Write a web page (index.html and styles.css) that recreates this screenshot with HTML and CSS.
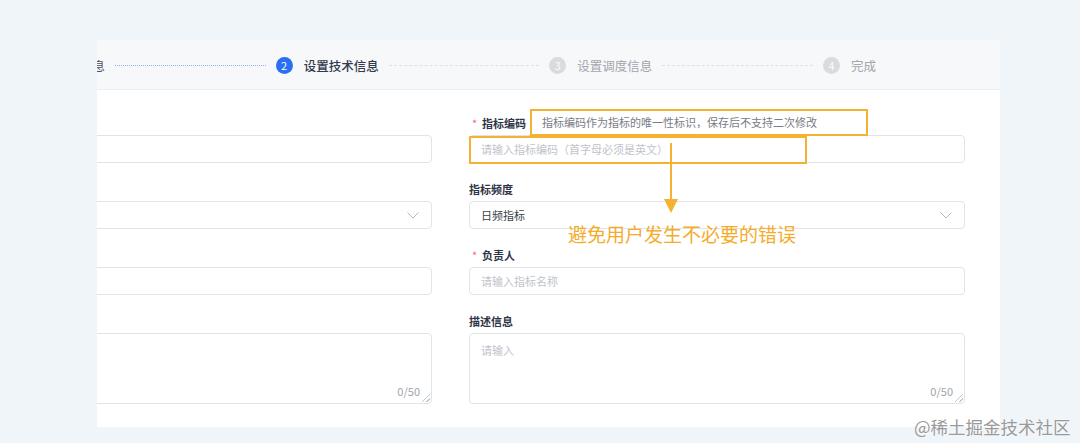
FILE: index.html
```html
<!DOCTYPE html>
<html lang="zh-CN">
<head>
<meta charset="utf-8">
<title>设置技术信息</title>
<link rel="stylesheet" href="styles.css">
</head>
<body>
  <div class="card">
    <div class="steps">
      <div class="steps-track">
        <div class="step done"><span class="dot">1</span><span class="step-title">设置基础信息</span></div>
        <div class="line done"></div>
        <div class="step active"><span class="dot">2</span><span class="step-title">设置技术信息</span></div>
        <div class="line"></div>
        <div class="step"><span class="dot">3</span><span class="step-title">设置调度信息</span></div>
        <div class="line"></div>
        <div class="step"><span class="dot">4</span><span class="step-title">完成</span></div>
      </div>
    </div>
    <div class="form">
      <div class="form-grid">
        <div class="col">
          <div class="field">
            <div class="label"></div>
            <input class="input">
          </div>
          <div class="field">
            <div class="label"></div>
            <div class="input select"><span class="ph"></span>
              <svg class="chev" width="12" height="7" viewBox="0 0 12 7"><path d="M0.5 0.5 L6 6 L11.5 0.5" fill="none" stroke="#b4b8bf" stroke-width="1"/></svg>
            </div>
          </div>
          <div class="field">
            <div class="label"></div>
            <input class="input">
          </div>
          <div class="field">
            <div class="label"></div>
            <div class="ta-wrap">
              <textarea class="input textarea"></textarea>
              <span class="count">0/50</span>
              <span class="grip"></span>
            </div>
          </div>
        </div>
        <div class="col">
          <div class="field">
            <div class="label"><span class="req">*</span>指标编码</div>
            <input class="input" placeholder="请输入指标编码（首字母必须是英文）">
          </div>
          <div class="field">
            <div class="label">指标频度</div>
            <div class="input select"><span class="val">日频指标</span>
              <svg class="chev" width="12" height="7" viewBox="0 0 12 7"><path d="M0.5 0.5 L6 6 L11.5 0.5" fill="none" stroke="#b4b8bf" stroke-width="1"/></svg>
            </div>
          </div>
          <div class="field">
            <div class="label"><span class="req">*</span>负责人</div>
            <input class="input" placeholder="请输入指标名称">
          </div>
          <div class="field">
            <div class="label">描述信息</div>
            <div class="ta-wrap">
              <textarea class="input textarea" placeholder="请输入"></textarea>
              <span class="count">0/50</span>
              <span class="grip"></span>
            </div>
          </div>
        </div>
      </div>
    </div>
  </div>

  <div class="note-box">指标编码作为指标的唯一性标识，保存后不支持二次修改</div>
  <div class="hl-box"></div>
  <div class="arrow-line"></div>
  <div class="arrow-head"></div>
  <div class="note-text">避免用户发生不必要的错误</div>
  <div class="watermark">@稀土掘金技术社区</div>
</body>
</html>
```

FILE: styles.css
```css
* { box-sizing: border-box; }

body {
  margin: 0;
  width: 1080px;
  height: 443px;
  overflow: hidden;
  position: relative;
  background: #f0f5f9;
  font-family: "Noto Sans CJK SC", "Noto Sans", sans-serif;
}

.card {
  margin: 40px 0 0 97px;
  width: 903px;
  height: 387px;
  overflow: hidden;
  background: #fff;
}

/* steps */
.steps {
  height: 50px;
  padding-top: 2px;
  background: #f7f8fa;
  border-bottom: 1px solid #eceff2;
  display: flex;
  align-items: center;
}

.steps-track {
  display: flex;
  align-items: center;
  flex-shrink: 0;
  width: 874px;
  margin-left: -95px;
}

.step {
  display: flex;
  align-items: center;
  gap: 11px;
  flex-shrink: 0;
}

.dot {
  width: 17px;
  height: 17px;
  border-radius: 50%;
  background: #d9dbdf;
  color: #fff;
  font-size: 10px;
  line-height: 1;
  display: flex;
  align-items: center;
  justify-content: center;
}

.step.active .dot { background: #2a6ff2; font-size: 11px; }
.step.done .dot { background: #2a6ff2; }

.step-title {
  font-size: 12.5px;
  line-height: 20px;
  color: #a2a6ad;
  white-space: nowrap;
}

.step.active .step-title { color: #343a4c; font-weight: 500; }
.step.done .step-title { color: #4d5260; }

.line {
  flex: 1;
  margin: 0 10px;
  border-top: 1px dashed #dfe0e3;
}

.line.done { border-top: 1px dotted #8eaef0; }

/* form */
.form {
  padding: 23px 35px 0 0;
}

.form-grid {
  display: grid;
  grid-template-columns: 496px 496px;
  column-gap: 37px;
  margin-left: -161px;
}

.field { margin-bottom: 16px; }

.label {
  height: 20px;
  line-height: 20px;
  margin-bottom: 2px;
  font-size: 11px;
  font-weight: 700;
  color: #2f3546;
  white-space: nowrap;
}

.req {
  display: inline-block;
  width: 13px;
  padding-left: 3px;
  color: #f56c6c;
  font-weight: 400;
}

.input {
  display: block;
  width: 100%;
  height: 28px;
  margin: 0;
  padding: 0 11px;
  border: 1px solid #e0e3e8;
  border-radius: 4px;
  background: #fff;
  font-family: "Noto Sans CJK SC", "Noto Sans", sans-serif;
  font-size: 11px;
  color: #333;
  outline: none;
}

.input::placeholder { color: #c0c3ca; }

.select {
  display: flex;
  align-items: center;
  justify-content: space-between;
  padding: 0 12px 0 11px;
}

.select .val { color: #3a3f4b; }

.ta-wrap { position: relative; }

.textarea {
  height: 71px;
  padding: 8px 11px;
  line-height: 17px;
  resize: none;
}

.count {
  position: absolute;
  right: 12px;
  bottom: 6px;
  font-size: 11px;
  line-height: 14px;
  color: #a0a4ab;
}

.grip {
  position: absolute;
  right: 2px;
  bottom: 2px;
  width: 8px;
  height: 8px;
  background:
    linear-gradient(135deg, transparent 46%, #c4c7cc 46%, #c4c7cc 54%, transparent 54%),
    linear-gradient(135deg, transparent 74%, #c4c7cc 74%, #c4c7cc 82%, transparent 82%);
}

/* annotations */
.note-box {
  position: absolute;
  left: 530px;
  top: 109px;
  width: 338px;
  height: 27px;
  padding-left: 10px;
  border: 2px solid #f5b232;
  background: #fff;
  font-size: 11px;
  line-height: 23px;
  color: #787c85;
  white-space: nowrap;
}

.hl-box {
  position: absolute;
  left: 469px;
  top: 136px;
  width: 338px;
  height: 28px;
  border: 2px solid #f5b232;
}

.arrow-line {
  position: absolute;
  left: 670px;
  top: 143px;
  width: 2px;
  height: 58px;
  background: #f5b232;
}

.arrow-head {
  position: absolute;
  left: 664px;
  top: 199px;
  width: 0;
  height: 0;
  border-left: 7px solid transparent;
  border-right: 7px solid transparent;
  border-top: 14px solid #f5b232;
}

.note-text {
  position: absolute;
  left: 568px;
  top: 222px;
  font-size: 19px;
  line-height: 24px;
  color: #f5ac2a;
  white-space: nowrap;
}

.watermark {
  position: absolute;
  left: 914px;
  top: 415px;
  font-size: 17.5px;
  line-height: 24px;
  color: #9a9a9a;
  text-shadow: 0 0 2px #fff;
  white-space: nowrap;
}
```
